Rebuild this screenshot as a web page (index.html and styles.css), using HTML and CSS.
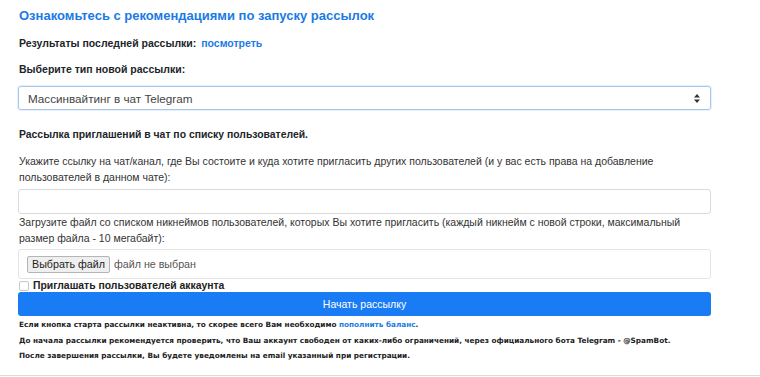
FILE: index.html
```html
<!DOCTYPE html>
<html lang="ru">
<head>
<meta charset="utf-8">
<title>Рассылка</title>
<link rel="stylesheet" href="styles.css">
</head>
<body>
<div class="page">
  <h1 class="title">Ознакомьтесь с рекомендациями по запуску рассылок</h1>
  <p class="label">Результаты последней рассылки: <a class="link" href="#">посмотреть</a></p>
  <p class="label">Выберите тип новой рассылки:</p>
  <div class="select">
    <span>Массинвайтинг в чат Telegram</span>
    <svg class="arrows" width="6" height="9" viewBox="0 0 6 9"><path d="M3 0 L6 3.5 H0 Z M3 9 L6 5.5 H0 Z" fill="#333"/></svg>
  </div>
  <p class="section">Рассылка приглашений в чат по списку пользователей.</p>
  <p class="hint">Укажите ссылку на чат/канал, где Вы состоите и куда хотите пригласить других пользователей (и у вас есть права на добавление пользователей в данном чате):</p>
  <div class="input"></div>
  <p class="hint">Загрузите файл со списком никнеймов пользователей, которых Вы хотите пригласить (каждый никнейм с новой строки, максимальный размер файла - 10 мегабайт):</p>
  <div class="file"><span class="filebtn">Выбрать файл</span><span class="filename">файл не выбран</span></div>
  <label class="check"><span class="box"></span>Приглашать пользователей аккаунта</label>
  <div class="start">Начать рассылку</div>
  <p class="note">Если кнопка старта рассылки неактивна, то скорее всего Вам необходимо <a class="link" href="#">пополнить баланс</a>.</p>
  <p class="note">До начала рассылки рекомендуется проверить, что Ваш аккаунт свободен от каких-либо ограничений, через официального бота Telegram - @SpamBot.</p>
  <p class="note">После завершения рассылки, Вы будете уведомлены на email указанный при регистрации.</p>
</div>
</body>
</html>
```

FILE: styles.css
```css
html, body {
  margin: 0;
  padding: 0;
  background: #fff;
}
body {
  font-family: "Liberation Sans", Arial, sans-serif;
  color: #212529;
  width: 760px;
  height: 377px;
  overflow: hidden;
}
.page {
  box-sizing: border-box;
  width: 760px;
  height: 376px;
  padding: 7px 49px 0 18px;
  border-bottom: 1px solid #dcdcdc;
}
.title {
  margin: 0 0 0 1px;
  font-size: 13px;
  line-height: 18px;
  font-weight: bold;
  color: #1b7ae4;
}
.label {
  margin: 10px 0 0 1px;
  font-size: 10.5px;
  line-height: 17px;
  font-weight: bold;
}
.label + .label {
  margin-top: 9px;
}
.link {
  color: #1b7ae4;
  text-decoration: none;
  font-weight: bold;
  margin-left: 2px;
}
.select {
  margin-top: 8px;
  height: 22px;
  border: 1px solid #a7c8ec;
  border-radius: 3px;
  display: flex;
  align-items: center;
  justify-content: space-between;
  padding: 0 9px 0 9px;
  font-size: 11.7px;
  color: #444;
  box-shadow: 0 0 0 1px #e6effa;
}
.arrows {
  margin-right: 1px;
}
.section {
  margin: 16px 0 0 1px;
  font-size: 10.4px;
  line-height: 17px;
  font-weight: bold;
}
.hint {
  margin: 10px 0 0 1px;
  font-size: 10.5px;
  line-height: 16px;
  color: #333;
}
.input {
  margin-top: 4px;
  height: 23px;
  border: 1px solid #dadada;
  border-radius: 3px;
}
.hint + .file {
  margin-top: 3px;
}
.input + .hint {
  margin-top: 0;
}
.file {
  height: 28px;
  border: 1px solid #e4e4e4;
  border-radius: 3px;
  display: flex;
  align-items: center;
  padding-left: 8px;
  font-size: 10.7px;
}
.filebtn {
  background: #efefef;
  border: 1px solid #b5b5b5;
  border-radius: 2px;
  padding: 0 4px;
  height: 15px;
  line-height: 15px;
  color: #222;
}
.filename {
  margin-left: 4px;
  color: #555;
}
.check {
  display: flex;
  align-items: center;
  height: 13px;
  font-size: 10.4px;
  font-weight: bold;
  color: #222;
}
.box {
  width: 8px;
  height: 8px;
  border: 1px solid #c8c8c8;
  border-radius: 2px;
  margin: 0 4px 0 1px;
}
.start {
  height: 24px;
  background: #1a7cf5;
  border-radius: 3px;
  color: #fff;
  font-size: 10.5px;
  display: flex;
  align-items: center;
  justify-content: center;
}
.note {
  margin: 4px 0 0 1px;
  font-family: "DejaVu Sans", Verdana, sans-serif;
  font-size: 7.3px;
  line-height: 10.5px;
  font-weight: bold;
  color: #222;
}
.note + .note {
  margin-top: 5px;
}
.note .link {
  margin-left: 0;
}
```
